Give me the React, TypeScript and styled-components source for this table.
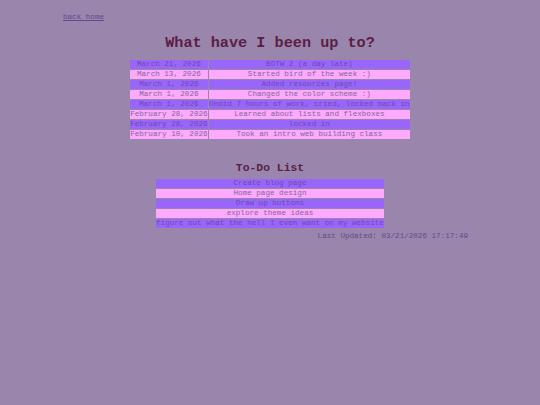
import React from "react";
import styled, { createGlobalStyle } from "styled-components";

const Global = createGlobalStyle`
  html, body { margin: 0; padding: 0; background: #9a85ad; }
  body { font-family: "Liberation Mono", "Courier New", monospace; color: #6b4a8c; }
`;

const Page = styled.div`
  width: 540px;
  min-height: 405px;
  background: #9a85ad;
  padding-top: 12px;
  box-sizing: border-box;
`;

const BackLink = styled.a`
  display: block;
  margin-left: 63px;
  font-size: 7.6px;
  line-height: 10px;
  color: #654890;
  text-decoration: underline;
`;

const Title = styled.h1`
  margin: 12px 0 0;
  text-align: center;
  font-size: 15.2px;
  line-height: 18px;
  font-weight: bold;
  color: #5a1f44;
`;

const Table = styled.table`
  margin: 7px auto 0;
  width: 282px;
  border-collapse: separate;
  border-spacing: 1px;
  font-size: 7.6px;
  line-height: 9px;
`;

const Cell = styled.td<{ $alt: boolean }>`
  padding: 0;
  height: 9px;
  text-align: center;
  white-space: nowrap;
  background: ${(p) => (p.$alt ? "#fdaafd" : "#9966fa")};
  color: ${(p) => (p.$alt ? "#85659c" : "#7048b0")};
`;

const SubTitle = styled.h2`
  margin: 21px 0 0;
  text-align: center;
  font-size: 11.4px;
  line-height: 14px;
  font-weight: bold;
  color: #5a1f44;
`;

const List = styled.ul`
  list-style: none;
  margin: 4px auto 0;
  padding: 0;
  width: 228px;
  display: flex;
  flex-direction: column;
  gap: 1px;
  font-size: 7.6px;
`;

const Item = styled.li<{ $alt: boolean }>`
  height: 9px;
  line-height: 9px;
  text-align: center;
  white-space: nowrap;
  background: ${(p) => (p.$alt ? "#fdaafd" : "#9966fa")};
  color: ${(p) => (p.$alt ? "#85659c" : "#7048b0")};
`;

const Updated = styled.div`
  width: 405px;
  margin: 3px 0 0 63px;
  text-align: right;
  font-size: 7.6px;
  line-height: 10px;
  color: #654890;
`;

const log: [string, string][] = [
  ["March 21, 2026", "BOTW 2 (a day late)"],
  ["March 13, 2026", "Started bird of the week :)"],
  ["March 1, 2026", "Added resources page!"],
  ["March 1, 2026", "Changed the color scheme :)"],
  ["March 1, 2026", "Undid 7 hours of work, cried, locked back in"],
  ["February 28, 2026", "Learned about lists and flexboxes"],
  ["February 28, 2026", "locked in"],
  ["February 10, 2026", "Took an intro web building class"],
];

const todos = [
  "Create blog page",
  "Home page design",
  "Draw up buttons",
  "explore theme ideas",
  "figure out what the hell I even want on my website",
];

export default function App() {
  return (
    <Page>
      <Global />
      <BackLink href="#">back home</BackLink>
      <Title>What have I been up to?</Title>
      <Table>
        <tbody>
          {log.map(([d, t], i) => (
            <tr key={i}>
              <Cell $alt={i % 2 === 1}>{d}</Cell>
              <Cell $alt={i % 2 === 1}>{t}</Cell>
            </tr>
          ))}
        </tbody>
      </Table>
      <SubTitle>To-Do List</SubTitle>
      <List>
        {todos.map((t, i) => (
          <Item key={i} $alt={i % 2 === 1}>{t}</Item>
        ))}
      </List>
      <Updated>Last Updated: 03/21/2026 17:17:49</Updated>
    </Page>
  );
}
